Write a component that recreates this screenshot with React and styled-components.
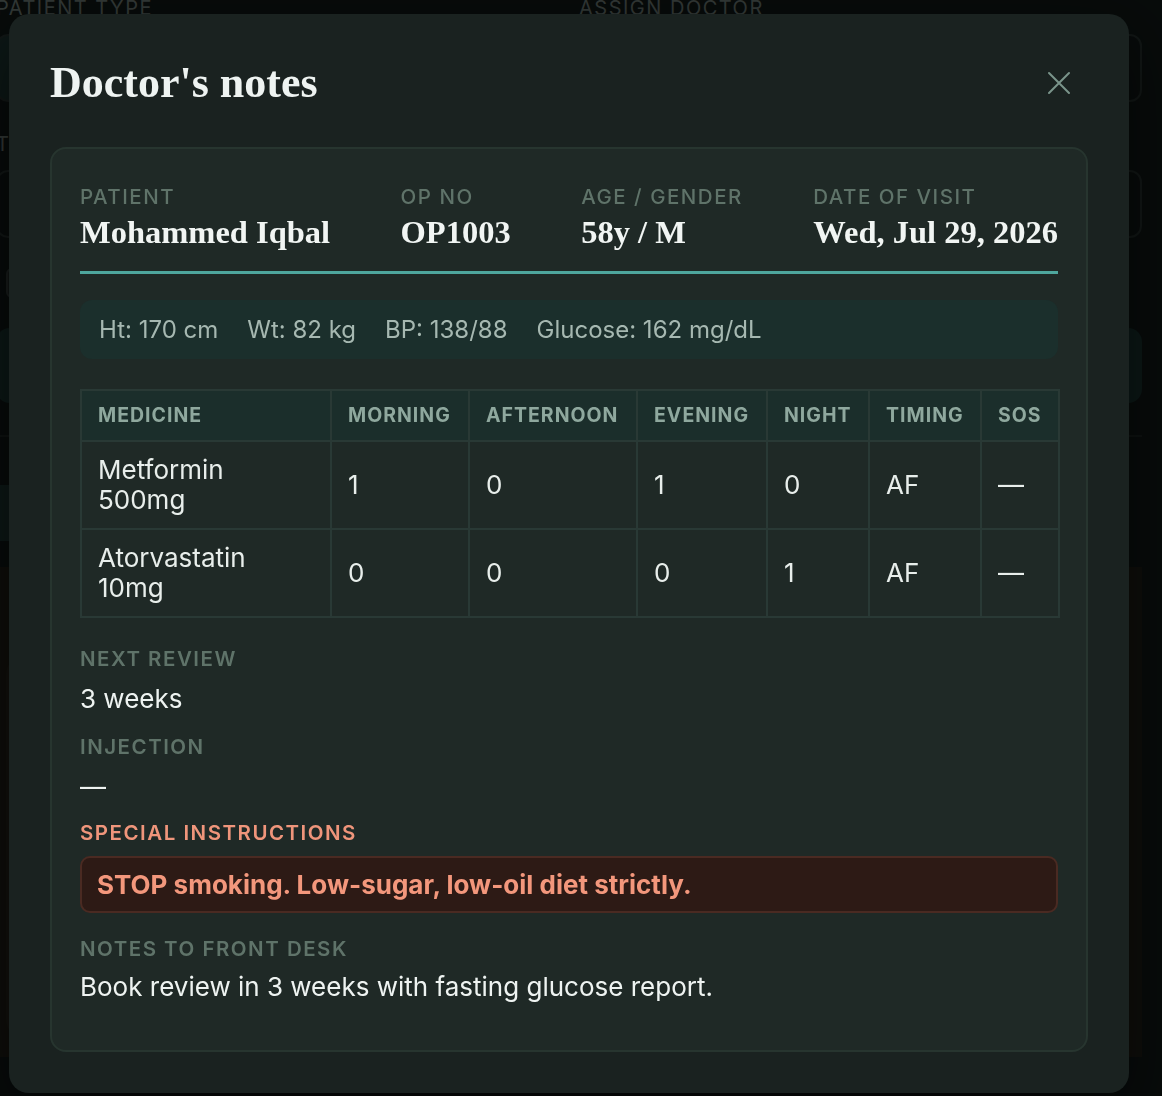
import React from 'react'
import styled, { createGlobalStyle } from 'styled-components'

const GlobalStyle = createGlobalStyle`
  html, body {
    margin: 0;
    padding: 0;
    background: #131c1a;
    font-family: Inter, "Noto Sans", "Liberation Sans", sans-serif;
    color: #e9efec;
  }
  * { box-sizing: border-box; }
`

const serif = `"Liberation Serif", "DejaVu Serif", serif`

// ---- page that sits behind the dialog ----

const Page = styled.div`
  height: 1096px;
  overflow: hidden;
  margin-left: -4px;
  width: 1146px;
`

const FormGrid = styled.div`
  display: grid;
  grid-template-columns: 560px 563px;
  column-gap: 23px;
  row-gap: 30px;
  margin-top: -4px;
`

const FieldLabel = styled.div`
  font-size: 20px;
  letter-spacing: 1.5px;
  text-transform: uppercase;
  color: #7c8b86;
  margin-bottom: 14px;
`

const Select = styled.div`
  height: 68px;
  border-radius: 12px;
  border: 2px solid #2c3835;
  background: ${p => (p.$teal ? '#1f3b37' : 'transparent')};
  display: flex;
  align-items: center;
  justify-content: flex-end;
  padding-right: 16px;
  color: #6f7c78;
`

const Check = styled.div`
  width: 26px;
  height: 30px;
  border-radius: 6px;
  border: 2px solid #3a4542;
  background: #26302e;
  margin-left: 10px;
`

const Banner = styled.div`
  height: 75px;
  margin-top: 30px;
  border-radius: 14px;
  background: #1d3b37;
`

const Divider = styled.div`
  height: 2px;
  margin-top: 32px;
  background: #222d2a;
`

const Tabs = styled.div`
  display: flex;
  margin-top: 48px;
  height: 56px;
`

const Tab = styled.div`
  width: 130px;
  background: ${p => (p.$active ? '#1f3b37' : 'transparent')};
  color: #8fa39c;
  font-size: 22px;
  display: flex;
  align-items: center;
  justify-content: center;
`

const BrownCard = styled.div`
  margin-top: 26px;
  height: 490px;
  background: #25231a;
  padding: 85px 20px 0 10px;
  display: flex;
  justify-content: space-between;
`

const BrownInner = styled.div`
  width: 60px;
  height: 390px;
  border: 3px solid #2d2b20;
  border-radius: 24px;
  background: #141b19;
  color: #6b6a55;
  font-size: 26px;
`

// ---- dialog ----

const Overlay = styled.div`
  position: fixed;
  inset: 0;
  background: rgba(0, 0, 0, 0.6);
  display: flex;
  align-items: flex-start;
  padding: 14px 0 0 9px;
`

const Modal = styled.div`
  width: 1120px;
  background: #1a2220;
  border-radius: 20px;
  padding: 43px 41px 41px;
  box-shadow: 0 24px 70px rgba(0, 0, 0, 0.55);
`

const Header = styled.div`
  display: flex;
  align-items: center;
  justify-content: space-between;
  margin-bottom: 37px;
`

const Title = styled.h2`
  margin: 0;
  font-family: ${serif};
  font-weight: 700;
  font-size: 44px;
  line-height: 1.2;
  color: #eef3f1;
`

const CloseButton = styled.button`
  border: 0;
  background: none;
  padding: 8px;
  margin-right: 9px;
  display: flex;
  color: #7a948a;
  cursor: pointer;
`

const Card = styled.div`
  border: 2px solid #27352f;
  border-radius: 16px;
  background: #1f2926;
  padding: 34px 28px 45px;
`

const InfoRow = styled.div`
  display: flex;
  justify-content: space-between;
  padding-bottom: 18px;
  border-bottom: 3.5px solid #4ea69d;
`

const Label = styled.div`
  font-size: 20.5px;
  line-height: 1.4;
  font-weight: ${p => (p.$strong ? 600 : 500)};
  letter-spacing: 1.5px;
  text-transform: uppercase;
  color: ${p => (p.$alert ? '#ef957b' : '#5f7369')};
`

const BigValue = styled.div`
  font-family: ${serif};
  font-weight: 700;
  font-size: 32.5px;
  line-height: 1.25;
  margin-top: 1px;
  color: #f1f5f3;
`

const Vitals = styled.div`
  display: flex;
  gap: 29px;
  margin-top: 26px;
  padding: 11.5px 19px;
  border-radius: 12px;
  background: #1b2f2c;
  font-size: 24px;
  line-height: 36px;
  color: #a6b8b1;
`

const Table = styled.table`
  width: 100%;
  margin-top: 30px;
  border-collapse: collapse;
  table-layout: fixed;
  border: 2px solid #293935;
`

const Th = styled.th`
  text-align: left;
  padding: 11px 16px;
  background: #1b2e2b;
  border: 2px solid #293935;
  font-size: 19.5px;
  line-height: 1.4;
  font-weight: 700;
  letter-spacing: 1px;
  color: #8fa89e;
`

const Td = styled.td`
  padding: 13px 16px;
  border: 2px solid #293935;
  font-size: 26px;
  line-height: 30px;
  color: #e8eeeb;
  vertical-align: middle;
`

const Fields = styled.div`
  display: flex;
  flex-direction: column;
  margin-top: 27px;
`

const Field = styled.div`
  display: flex;
  flex-direction: column;
  gap: ${p => p.$gap || 7}px;
  margin-top: ${p => p.$top || 0}px;
`

const Value = styled.div`
  font-size: 26px;
  line-height: 36px;
  color: #eef3f1;
`

const Alert = styled.div`
  border: 2px solid #4a2a22;
  border-radius: 10px;
  background: #2d1a15;
  padding: 8.5px 15px;
  font-size: 26px;
  line-height: 36px;
  font-weight: 700;
  color: #f3977c;
`

const medicines = [
  { name: ['Metformin', '500mg'], doses: ['1', '0', '1', '0'], timing: 'AF', sos: '—' },
  { name: ['Atorvastatin', '10mg'], doses: ['0', '0', '0', '1'], timing: 'AF', sos: '—' },
]

const columns = [
  ['Medicine', 250],
  ['Morning', 138],
  ['Afternoon', 168],
  ['Evening', 130],
  ['Night', 102],
  ['Timing', 112],
  ['SOS', 78],
]

function Backdrop() {
  return (
    <Page>
      <FormGrid>
        <div>
          <FieldLabel>Patient type</FieldLabel>
          <Select $teal />
        </div>
        <div>
          <FieldLabel>Assign doctor</FieldLabel>
          <Select>⌄</Select>
        </div>
        <div>
          <FieldLabel>Token</FieldLabel>
          <Select />
        </div>
        <div>
          <FieldLabel>Slot</FieldLabel>
          <Select>⌄</Select>
        </div>
      </FormGrid>
      <Check style={{ marginTop: 30 }} />
      <Banner />
      <Divider />
      <Tabs>
        <Tab $active>AI</Tab>
        <Tab>Notes</Tab>
      </Tabs>
      <BrownCard>
        <BrownInner>C</BrownInner>
        <BrownInner />
      </BrownCard>
    </Page>
  )
}

export default function App() {
  return (
    <>
      <GlobalStyle />
      <Backdrop />
      <Overlay>
        <Modal role="dialog" aria-label="Doctor's notes">
          <Header>
            <Title>Doctor's notes</Title>
            <CloseButton aria-label="Close">
              <svg width="24" height="24" viewBox="0 0 24 24" fill="none" stroke="currentColor" strokeWidth="2" strokeLinecap="round">
                <path d="M2 2 L22 22 M22 2 L2 22" />
              </svg>
            </CloseButton>
          </Header>

          <Card>
            <InfoRow>
              <div>
                <Label>Patient</Label>
                <BigValue>Mohammed Iqbal</BigValue>
              </div>
              <div>
                <Label>OP No</Label>
                <BigValue>OP1003</BigValue>
              </div>
              <div>
                <Label>Age / Gender</Label>
                <BigValue>58y / M</BigValue>
              </div>
              <div>
                <Label>Date of visit</Label>
                <BigValue>Wed, Jul 29, 2026</BigValue>
              </div>
            </InfoRow>

            <Vitals>
              <span>Ht: 170 cm</span>
              <span>Wt: 82 kg</span>
              <span>BP: 138/88</span>
              <span>Glucose: 162 mg/dL</span>
            </Vitals>

            <Table>
              <colgroup>
                {columns.map(([name, w]) => (
                  <col key={name} style={{ width: w }} />
                ))}
              </colgroup>
              <thead>
                <tr>
                  {columns.map(([name]) => (
                    <Th key={name}>{name.toUpperCase()}</Th>
                  ))}
                </tr>
              </thead>
              <tbody>
                {medicines.map(m => (
                  <tr key={m.name[0]}>
                    <Td>
                      {m.name[0]}
                      <br />
                      {m.name[1]}
                    </Td>
                    {m.doses.map((d, i) => (
                      <Td key={i}>{d}</Td>
                    ))}
                    <Td>{m.timing}</Td>
                    <Td>{m.sos}</Td>
                  </tr>
                ))}
              </tbody>
            </Table>

            <Fields>
              <Field>
                <Label $strong>Next review</Label>
                <Value>3 weeks</Value>
              </Field>
              <Field $top={16}>
                <Label $strong>Injection</Label>
                <Value>—</Value>
              </Field>
              <Field $top={14} $gap={9}>
                <Label $strong $alert>Special instructions</Label>
                <Alert>STOP smoking. Low-sugar, low-oil diet strictly.</Alert>
              </Field>
              <Field $top={22} $gap={5}>
                <Label $strong>Notes to front desk</Label>
                <Value>Book review in 3 weeks with fasting glucose report.</Value>
              </Field>
            </Fields>
          </Card>
        </Modal>
      </Overlay>
    </>
  )
}
